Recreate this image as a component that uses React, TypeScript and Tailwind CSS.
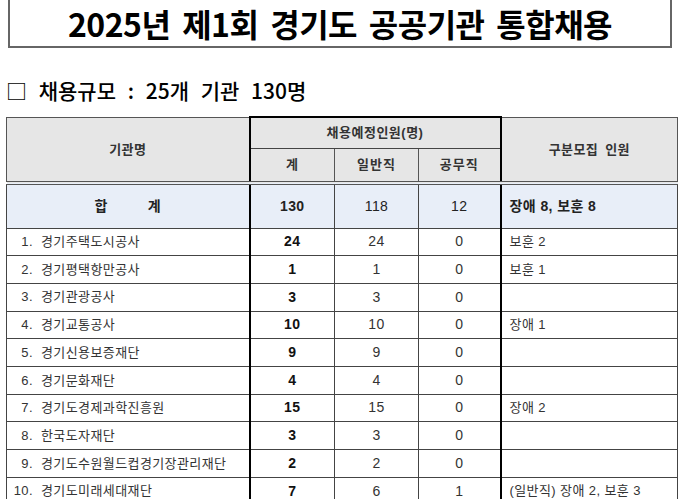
import React from "react";

type Row = {
  no: number;
  name: string;
  total: number;
  general: number;
  official: number;
  note: string;
};

const rows: Row[] = [
  { no: 1, name: "경기주택도시공사", total: 24, general: 24, official: 0, note: "보훈 2" },
  { no: 2, name: "경기평택항만공사", total: 1, general: 1, official: 0, note: "보훈 1" },
  { no: 3, name: "경기관광공사", total: 3, general: 3, official: 0, note: "" },
  { no: 4, name: "경기교통공사", total: 10, general: 10, official: 0, note: "장애 1" },
  { no: 5, name: "경기신용보증재단", total: 9, general: 9, official: 0, note: "" },
  { no: 6, name: "경기문화재단", total: 4, general: 4, official: 0, note: "" },
  { no: 7, name: "경기도경제과학진흥원", total: 15, general: 15, official: 0, note: "장애 2" },
  { no: 8, name: "한국도자재단", total: 3, general: 3, official: 0, note: "" },
  { no: 9, name: "경기도수원월드컵경기장관리재단", total: 2, general: 2, official: 0, note: "" },
  { no: 10, name: "경기도미래세대재단", total: 7, general: 6, official: 1, note: "(일반직) 장애 2, 보훈 3" },
];

const font = { fontFamily: '"Liberation Sans", "Noto Sans CJK KR", sans-serif' };
const dbl = { borderStyle: "solid solid double solid" };

export default function App() {
  return (
    <div className="relative h-[499px] w-[680px] overflow-hidden bg-white text-[#222]" style={font}>
      {/* title box */}
      <div className="mx-[8px] mt-[-2px] flex h-[50px] items-center justify-center border-2 border-[#666]">
        <h1
          className="text-[32px] font-bold leading-[40px] tracking-[-0.5px] text-black [word-spacing:5px]"
          style={{ fontFamily: '"Noto Sans CJK KR", sans-serif' }}
        >
          2025년 제1회 경기도 공공기관 통합채용
        </h1>
      </div>

      {/* subtitle */}
      <div
        className="mt-[30px] ml-[6px] text-[21px] font-medium leading-[24px] text-black [word-spacing:7px]"
        style={{ fontFamily: '"Noto Sans CJK KR", sans-serif' }}
      >
        □ 채용규모 : 25개 기관 130명
      </div>

      {/* table */}
      <table className="mt-[14px] ml-[6px] w-[671px] table-fixed border-collapse text-[13px] tracking-[0.4px] text-[#333]">
        <colgroup>
          <col className="w-[243px]" />
          <col className="w-[85px]" />
          <col className="w-[84px]" />
          <col className="w-[82px]" />
          <col className="w-[177px]" />
        </colgroup>
        <thead>
          <tr className="h-[31px] bg-[#e6e6e6]">
            <th rowSpan={2} className="border border-b-[4px] border-[#555] border-r-2 border-r-black font-bold" style={dbl}>
              기관명
            </th>
            <th colSpan={3} className="border border-x-2 border-t-2 border-[#444] border-x-black border-t-black font-bold tracking-[0.5px]">
              채용예정인원(명)
            </th>
            <th rowSpan={2} className="border border-b-[4px] border-[#555] border-l-2 border-l-black font-bold [word-spacing:3px]" style={dbl}>
              구분모집 인원
            </th>
          </tr>
          <tr className="h-[35px] bg-[#e6e6e6]">
            <th className="border border-b-[4px] border-[#555] border-l-2 border-l-black font-bold" style={dbl}>
              계
            </th>
            <th className="border border-b-[4px] border-[#555] font-bold tracking-[1px]" style={dbl}>
              일반직
            </th>
            <th className="border border-b-[4px] border-[#555] border-r-2 border-r-black font-bold tracking-[1px]" style={dbl}>
              공무직
            </th>
          </tr>
        </thead>
        <tbody>
          <tr className="h-[45px] bg-[#e8eef8] text-[14px] text-[#222]">
            <td className="border border-[#444] border-r-2 border-r-black text-center font-bold">
              합<span className="inline-block w-[40px]" />계
            </td>
            <td className="border border-[#444] text-center font-bold">130</td>
            <td className="border border-[#444] text-center">118</td>
            <td className="border border-[#444] border-r-2 border-r-black text-center">12</td>
            <td className="border border-[#444] pl-[8px] font-bold">장애 8, 보훈 8</td>
          </tr>
          {rows.map((r) => (
            <tr key={r.no} className="h-[27.7px]">
              <td className="border border-[#444] border-r-2 border-r-black py-0">
                <span className="inline-block w-[26px] text-right">{r.no}.</span>
                <span className="ml-[8px]">{r.name}</span>
              </td>
              <td className="border border-[#444] text-center text-[14px] font-bold text-[#111]">{r.total}</td>
              <td className="border border-[#444] text-center text-[14px]">{r.general}</td>
              <td className="border border-[#444] border-r-2 border-r-black text-center text-[14px]">{r.official}</td>
              <td className="border border-[#444] pl-[8px]">{r.note}</td>
            </tr>
          ))}
        </tbody>
      </table>
    </div>
  );
}
